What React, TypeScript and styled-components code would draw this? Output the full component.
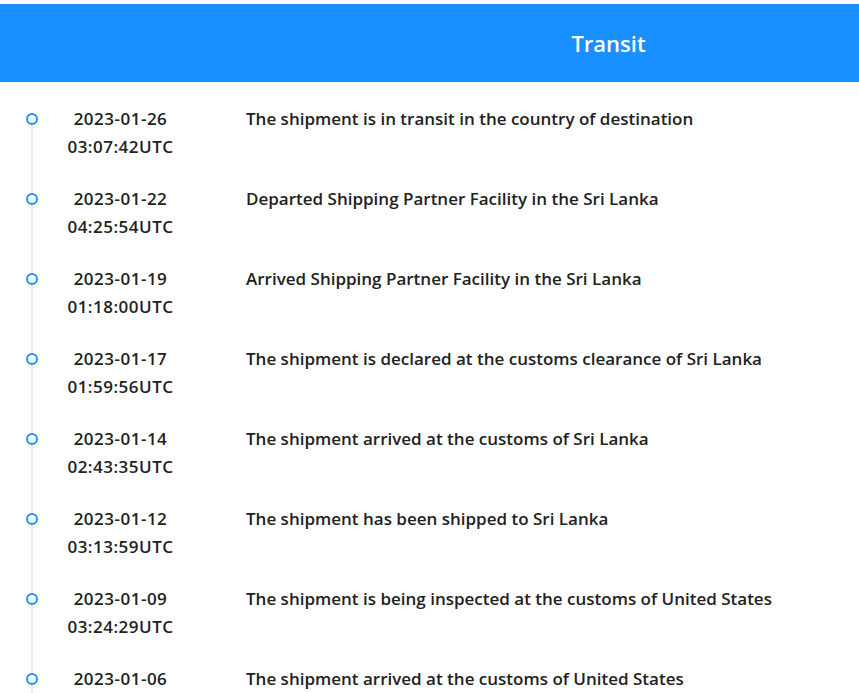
import React, { FC } from "react";
import styled, { createGlobalStyle } from "styled-components";

interface TrackEvent {
  date: string;
  time: string;
  text: string;
}

const events: TrackEvent[] = [
  { date: "2023-01-26", time: "03:07:42UTC", text: "The shipment is in transit in the country of destination" },
  { date: "2023-01-22", time: "04:25:54UTC", text: "Departed Shipping Partner Facility in the Sri Lanka" },
  { date: "2023-01-19", time: "01:18:00UTC", text: "Arrived Shipping Partner Facility in the Sri Lanka" },
  { date: "2023-01-17", time: "01:59:56UTC", text: "The shipment is declared at the customs clearance of Sri Lanka" },
  { date: "2023-01-14", time: "02:43:35UTC", text: "The shipment arrived at the customs of Sri Lanka" },
  { date: "2023-01-12", time: "03:13:59UTC", text: "The shipment has been shipped to Sri Lanka" },
  { date: "2023-01-09", time: "03:24:29UTC", text: "The shipment is being inspected at the customs of United States" },
  { date: "2023-01-06", time: "02:10:11UTC", text: "The shipment arrived at the customs of United States" }
];

const GlobalStyle = createGlobalStyle`
  body {
    margin: 0;
    padding-top: 4px;
    background: #fff;
    font-family: "Open Sans", "Noto Sans", sans-serif;
    overflow: hidden;
  }
`;

const TimelineRow: FC<{ event: TrackEvent; first: boolean }> = ({ event, first }) => (
  <Item>
    <Rail>
      <TailTop visible={!first} />
      <Dot />
      <Tail />
    </Rail>
    <When>
      <div>{event.date}</div>
      <div>{event.time}</div>
    </When>
    <What>{event.text}</What>
  </Item>
);

export default function App() {
  return (
    <>
      <GlobalStyle />
      <Header>
        <Title>Transit</Title>
      </Header>
      <List>
        {events.map((e, i) => (
          <TimelineRow key={e.date} event={e} first={i === 0} />
        ))}
      </List>
    </>
  );
}

const Header = styled.header`
  height: 78px;
  background-color: #1890ff;
  display: flex;
  align-items: center;
  justify-content: center;
  padding-left: 358px;
`;

const Title = styled.h2`
  margin: 0;
  color: #fff;
  font-size: 22px;
  font-weight: 600;
`;

const List = styled.ul`
  list-style: none;
  margin: 0;
  padding: 23px 0 0 26px;
`;

const Item = styled.li`
  display: grid;
  grid-template-columns: 12px 165px 1fr;
  height: 80px;
  color: #222;
  font-size: 17px;
  font-weight: 600;
  line-height: 28px;
`;

const Rail = styled.div`
  display: flex;
  flex-direction: column;
  align-items: center;
`;

const TailTop = styled.div<{ visible: boolean }>`
  height: 8px;
  width: 2px;
  background: ${p => (p.visible ? "#ebebeb" : "transparent")};
`;

const Dot = styled.span`
  box-sizing: border-box;
  width: 12px;
  height: 12px;
  border: 2px solid #1890ff;
  border-radius: 50%;
  background: #fff;
`;

const Tail = styled.div`
  flex: 1;
  width: 2px;
  background: #ebebeb;
`;

const When = styled.div`
  text-align: center;
  letter-spacing: 0.5px;
`;

const What = styled.div`
  padding-left: 43px;
`;
